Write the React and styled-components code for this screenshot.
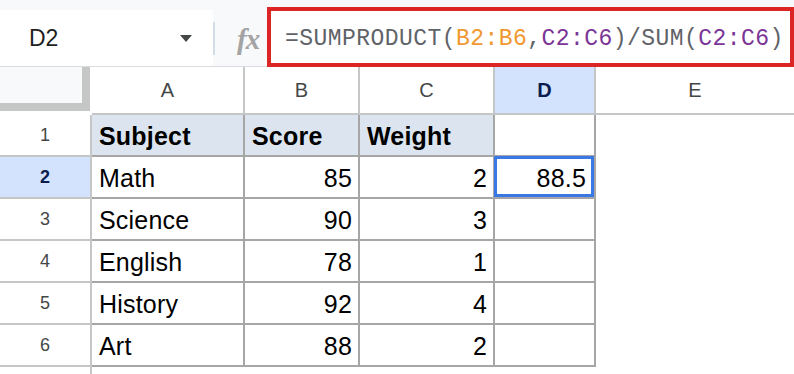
import React from "react";
import styled, { createGlobalStyle } from "styled-components";

const GlobalStyle = createGlobalStyle`
  html, body {
    margin: 0;
    padding: 0;
    background: #ffffff;
    overflow: hidden;
  }
  body {
    font-family: "Liberation Sans", Arial, sans-serif;
  }
`;

const rows = [
  { subject: "Subject", score: "Score", weight: "Weight", head: true },
  { subject: "Math", score: "85", weight: "2", result: "88.5" },
  { subject: "Science", score: "90", weight: "3" },
  { subject: "English", score: "78", weight: "1" },
  { subject: "History", score: "92", weight: "4" },
  { subject: "Art", score: "88", weight: "2" },
];

const columns = ["A", "B", "C", "D", "E"];

function App() {
  return (
    <>
      <GlobalStyle />
      <Page>
        <Toolbar>
          <NameBox>
            <span>D2</span>
            <Caret />
          </NameBox>
          <Divider />
          <FxArea>fx</FxArea>
          <FormulaBox>
            <Token $kind="fn">=SUMPRODUCT(</Token>
            <Token $kind="orange">B2:B6</Token>
            <Token $kind="fn">,</Token>
            <Token $kind="purple">C2:C6</Token>
            <Token $kind="fn">)/SUM(</Token>
            <Token $kind="purple">C2:C6</Token>
            <Token $kind="fn">)</Token>
          </FormulaBox>
        </Toolbar>

        <Sheet>
          <Corner>
            <CornerFill />
          </Corner>
          {columns.map((c) => (
            <ColHeader key={c} $active={c === "D"} $last={c === "E"}>
              {c}
            </ColHeader>
          ))}

          {rows.map((r, i) => (
            <React.Fragment key={i}>
              <RowHeader $active={i === 1}>{i + 1}</RowHeader>
              <Cell $head={r.head}>{r.subject}</Cell>
              <Cell $head={r.head} $num={!r.head}>
                {r.score}
              </Cell>
              <Cell $head={r.head} $num={!r.head}>
                {r.weight}
              </Cell>
              <Cell $num $selected={!!r.result}>
                {r.result}
              </Cell>
              <Blank />
            </React.Fragment>
          ))}

          <RowHeader $open />
          <Blank />
          <Blank />
          <Blank />
          <Blank />
          <Blank />
        </Sheet>
      </Page>
    </>
  );
}

export default App;

const Page = styled.div`
  width: 794px;
  height: 374px;
  display: flex;
  flex-direction: column;
  overflow: hidden;
`;

const Toolbar = styled.div`
  height: 67px;
  flex: none;
  display: flex;
  align-items: flex-end;
  background: #f8f9fa;
  border-bottom: 1px solid #dadce0;
  box-sizing: border-box;
`;

const NameBox = styled.div`
  width: 213px;
  height: 56px;
  box-sizing: border-box;
  background: #ffffff;
  display: flex;
  align-items: center;
  justify-content: space-between;
  padding: 0 21px 0 29px;
  font-size: 23px;
  color: #1f1f1f;
`;

const Caret = styled.span`
  width: 0;
  height: 0;
  border-left: 6px solid transparent;
  border-right: 6px solid transparent;
  border-top: 7px solid #444746;
`;

const Divider = styled.div`
  width: 2px;
  height: 33px;
  align-self: center;
  margin-top: 10px;
  background: #d3dde8;
`;

const FxArea = styled.div`
  width: 52px;
  height: 56px;
  box-sizing: border-box;
  display: flex;
  align-items: center;
  padding: 2px 0 0 22px;
  font-family: "Liberation Serif", "DejaVu Serif", serif;
  font-style: italic;
  font-weight: 700;
  font-size: 29px;
  color: #a3a3a3;
  letter-spacing: -1px;
`;

const FormulaBox = styled.div`
  flex: 1;
  height: 60px;
  margin-bottom: -1px;
  box-sizing: border-box;
  border: 4px solid #dc2626;
  background: #ffffff;
  display: flex;
  align-items: center;
  padding: 3px 0 0 14px;
  font-family: "Liberation Mono", "DejaVu Sans Mono", monospace;
  font-size: 23px;
  letter-spacing: 0.45px;
  white-space: pre;
`;

const tokenColors = {
  fn: "#5f6368",
  orange: "#f0982f",
  purple: "#7b3596",
};

const Token = styled.span`
  color: ${(p) => tokenColors[p.$kind]};
`;

const Sheet = styled.div`
  flex: 1;
  display: grid;
  grid-template-columns: 92px 153px 115px 135px 101px 1fr;
  grid-template-rows: 48px repeat(6, 42px) 1fr;
  background: #ffffff;
`;

const Corner = styled.div`
  box-sizing: border-box;
  padding: 0 2px 2px 0;
  border-bottom: 2px solid transparent;
`;

const CornerFill = styled.div`
  height: 100%;
  box-sizing: border-box;
  background: #f8f9fa;
  border-right: 8px solid #c4c7c5;
  border-bottom: 8px solid #c4c7c5;
`;

const ColHeader = styled.div`
  box-sizing: border-box;
  display: flex;
  align-items: center;
  justify-content: center;
  font-size: 20px;
  color: ${(p) => (p.$active ? "#0b1c4f" : "#444746")};
  font-weight: ${(p) => (p.$active ? 700 : 400)};
  background: ${(p) => (p.$active ? "#d3e3fd" : "#ffffff")};
  border-right: ${(p) => (p.$last ? "none" : "2px solid #c4c7c5")};
  border-bottom: 2px solid #c4c7c5;
`;

const RowHeader = styled.div`
  box-sizing: border-box;
  display: flex;
  align-items: center;
  justify-content: center;
  font-size: 18px;
  color: ${(p) => (p.$active ? "#0b1c4f" : "#444746")};
  font-weight: ${(p) => (p.$active ? 700 : 400)};
  background: ${(p) => (p.$active ? "#d3e3fd" : "#ffffff")};
  border-right: 2px solid #c4c7c5;
  border-bottom: ${(p) => (p.$open ? "none" : "2px solid #c4c7c5")};
`;

const Cell = styled.div`
  position: relative;
  box-sizing: border-box;
  display: flex;
  align-items: center;
  justify-content: ${(p) => (p.$num ? "flex-end" : "flex-start")};
  padding: 2px 6px 0 7px;
  font-size: 25px;
  letter-spacing: 0.2px;
  color: #000000;
  font-weight: ${(p) => (p.$head ? 700 : 400)};
  background: ${(p) => (p.$head ? "#dce5ef" : "#ffffff")};
  border-right: 2px solid #a6a6a6;
  border-bottom: 2px solid #a6a6a6;

  ${(p) =>
    p.$selected &&
    `
    padding-right: 8px;
    &::after {
      content: "";
      position: absolute;
      top: -1px;
      left: -1px;
      right: 0;
      bottom: 0;
      border: 3px solid #3a78e6;
    }
  `}
`;

const Blank = styled.div`
  background: #ffffff;
`;
